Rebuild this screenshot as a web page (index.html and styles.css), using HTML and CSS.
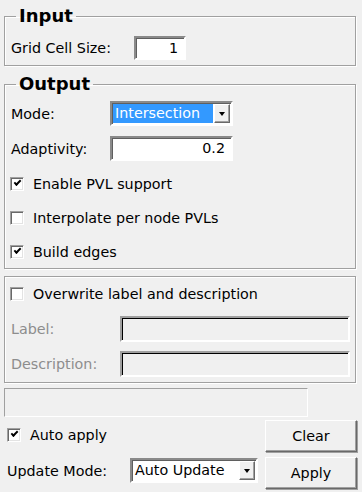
FILE: index.html
```html
<!DOCTYPE html>
<html lang="en">
<head>
  <meta charset="UTF-8" />
  <title>Grid Converter</title>
  <link rel="stylesheet" href="styles.css">
</head>
<body>
  <fieldset class="group group-input">
    <legend>Input</legend>
    <div class="row">
      <span class="label w-grid">Grid Cell Size:</span>
      <div class="field num small">1</div>
    </div>
  </fieldset>

  <fieldset class="group group-output">
    <legend>Output</legend>
    <div class="row">
      <span class="label w-out">Mode:</span>
      <div class="combo mode">
        <span class="combo-text selected">Intersection</span>
        <span class="combo-btn"><i class="arrow"></i></span>
      </div>
    </div>
    <div class="row">
      <span class="label w-out">Adaptivity:</span>
      <div class="field num mode">0.2</div>
    </div>
    <div class="check-row"><span class="box checked"></span>Enable PVL support</div>
    <div class="check-row"><span class="box"></span>Interpolate per node PVLs</div>
    <div class="check-row"><span class="box checked"></span>Build edges</div>
  </fieldset>

  <fieldset class="group group-meta">
    <div class="check-row first"><span class="box"></span>Overwrite label and description</div>
    <div class="row tall">
      <span class="label disabled w-meta">Label:</span>
      <div class="field off"></div>
    </div>
    <div class="row tall">
      <span class="label disabled w-meta">Description:</span>
      <div class="field off"></div>
    </div>
  </fieldset>

  <div class="status"></div>

  <div class="footer">
    <div class="footer-left">
      <div class="check-row auto"><span class="box checked"></span>Auto apply</div>
      <div class="row">
        <span class="label w-upd">Update Mode:</span>
        <div class="combo upd">
          <span class="combo-text">Auto Update</span>
          <span class="combo-btn"><i class="arrow"></i></span>
        </div>
      </div>
    </div>
    <div class="footer-right">
      <button class="btn">Clear</button>
      <button class="btn">Apply</button>
    </div>
  </div>
</body>
</html>
```

FILE: styles.css
```css
body {
  margin: 0;
  background: #f0f0f0;
  font-family: 'DejaVu Sans', sans-serif;
  font-size: 14.3px;
  color: #000;
  width: 362px;
  height: 492px;
  overflow: hidden;
}
.group {
  margin: 0 6px 0 4px;
  padding: 0 5px 0 6px;
  border: 1px solid #a0a0a0;
  box-shadow: 1px 1px 0 #fff, inset 1px 1px 0 #fff;
  min-width: 0;
}
.group legend {
  font-weight: bold;
  font-size: 18px;
  line-height: 22px;
  padding: 0 3px;
  margin-left: 5px;
}
.group-input {
  margin-top: 5px;
  padding-top: 8px;
  padding-bottom: 5px;
}
.group-output {
  margin-top: 7px;
  padding-top: 6px;
  padding-bottom: 4px;
}
.group-meta {
  margin-top: 7px;
  padding-top: 5px;
  padding-bottom: 5px;
}
.row {
  display: flex;
  align-items: center;
  height: 25px;
}
.group-output .row + .row {
  margin-top: 10px;
}
.row.tall {
  height: 26px;
  margin-top: 10px;
}
.row.tall + .row.tall {
  margin-top: 9px;
}
.label { flex: none; }
.w-grid { width: 123px; }
.w-out { width: 99px; }
.w-meta { width: 109px; }
.w-upd { width: 123px; }
.disabled { color: #8d8d8d; }

.field {
  box-sizing: border-box;
  height: 100%;
  background: #fff;
  border-style: solid;
  border-width: 2px;
  border-color: #8a8a8a #fff #fff #8a8a8a;
  box-shadow: inset 1px 1px 0 #5f5f5f;
  padding: 0 6px;
  line-height: 21px;
}
.field.num { text-align: right; }
.field.small { width: 52px; height: 24px; }
.field.mode { width: 123px; }
.field.off {
  flex: 1;
  background: #f0f0f0;
  border-color: #a0a0a0 #fff #fff #a0a0a0;
  box-shadow: inset 1px 1px 0 #000;
}

.combo {
  box-sizing: border-box;
  display: flex;
  height: 25px;
  background: #fff;
  border-style: solid;
  border-width: 2px;
  border-color: #8a8a8a #fff #fff #8a8a8a;
  box-shadow: inset 1px 1px 0 #5f5f5f;
  padding: 1px;
}
.combo.mode { width: 123px; }
.combo.upd { width: 128px; }
.combo-text {
  flex: 1;
  line-height: 19px;
  padding-left: 2px;
  white-space: nowrap;
  overflow: hidden;
}
.combo-text.selected {
  background: #3399ff;
  color: #fff;
  margin-right: 1px;
}
.combo-btn {
  box-sizing: border-box;
  flex: none;
  width: 16px;
  background: #f0f0f0;
  border-style: solid;
  border-width: 1px;
  border-color: #fff #696969 #696969 #fff;
  box-shadow: inset -1px -1px 0 #a0a0a0;
  display: flex;
  align-items: center;
  justify-content: center;
}
.arrow {
  width: 0;
  height: 0;
  border-left: 3px solid transparent;
  border-right: 3px solid transparent;
  border-top: 4px solid #000;
  margin-right: 1px;
}

.check-row {
  display: flex;
  align-items: center;
  height: 24px;
  margin-left: -1px;
  margin-top: 10px;
}
.group-output .row + .check-row { margin-top: 11px; }
.check-row.first { margin-top: 0; }
.box {
  box-sizing: border-box;
  width: 14px;
  height: 14px;
  margin-right: 9px;
  background: #fff;
  border-style: solid;
  border-width: 1px;
  border-color: #a0a0a0 #fff #fff #a0a0a0;
  box-shadow: inset 1px 1px 0 #696969, inset -1px -1px 0 #e3e3e3;
  position: relative;
}
.box.checked::after {
  content: "";
  position: absolute;
  left: 3px;
  top: 2px;
  width: 5px;
  height: 2px;
  border-left: 2px solid #000;
  border-bottom: 2px solid #000;
  transform: rotate(-45deg);
}

.status {
  box-sizing: border-box;
  margin: 5px 0 0 4px;
  width: 304px;
  height: 29px;
  border: 1px solid #a0a0a0;
  border-right-color: #fff;
  border-bottom-color: #fff;
}

.footer {
  display: flex;
  justify-content: space-between;
  padding: 3px 5px 0 7px;
}
.footer-left {
  display: flex;
  flex-direction: column;
}
.check-row.auto {
  margin: 8px 0 0 0;
  height: 14px;
}
.footer-left .row {
  margin-top: 16px;
}
.footer-right {
  display: flex;
  flex-direction: column;
  gap: 5px;
}
.btn {
  box-sizing: border-box;
  width: 92px;
  height: 32px;
  font: inherit;
  color: #000;
  background: #f0f0f0;
  border-style: solid;
  border-width: 1px;
  border-color: #fff #696969 #696969 #fff;
  box-shadow: inset -1px -1px 0 #a0a0a0, 1px 1px 0 #a0a0a0;
  padding: 0;
}
```
